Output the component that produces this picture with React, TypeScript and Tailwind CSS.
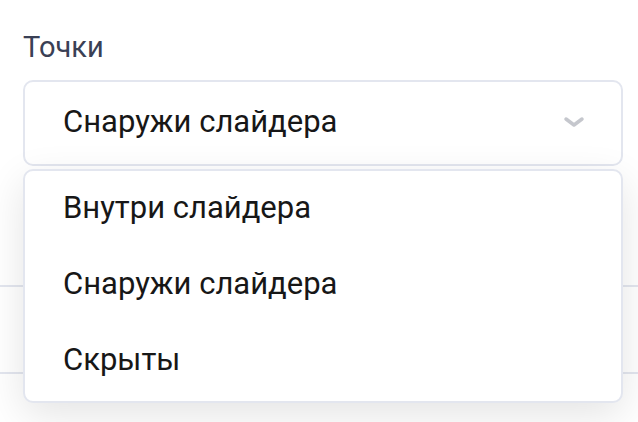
export default function App() {
  const options = ["Внутри слайдера", "Снаружи слайдера", "Скрыты"];
  return (
    <div className="relative w-[638px] h-[422px] overflow-hidden bg-white font-['Roboto',sans-serif]">
      {/* Form field */}
      <div className="px-[23px] pt-[30px]">
        <div className="text-[29px] leading-[34px] text-[#3a4055]">Точки</div>
        <div className="mt-[16px] flex h-[86px] w-[600px] items-center justify-between rounded-[10px] border-2 border-[#e3e6ef] pl-[38px] pr-[36px] pb-[2px] text-[31px] text-[#171717]">
          <span>Снаружи слайдера</span>
          <svg width="22" height="12" viewBox="0 0 22 12" fill="none">
            <path d="M3 3l8 6 8-6" stroke="#c5c7cd" strokeWidth="3.5" strokeLinecap="round" strokeLinejoin="round" />
          </svg>
        </div>
      </div>

      {/* Content underneath the menu */}
      <div className="mt-[34px] h-[87px] border-b-2 border-[#e3e6ef]" />
      <div className="h-[87px] border-b-2 border-[#e3e6ef]" />

      {/* Dropdown menu */}
      <div className="absolute left-[23px] top-[169px] w-[600px] h-[234px] rounded-[10px] border-2 border-[#e3e6ef] bg-white shadow-[0_12px_40px_rgba(0,0,0,0.11)]">
        {options.map((o) => (
          <div key={o} className="-mt-[1px] flex h-[77px] items-center pl-[38px] text-[31px] text-[#171717]">
            {o}
          </div>
        ))}
      </div>
    </div>
  );
}
